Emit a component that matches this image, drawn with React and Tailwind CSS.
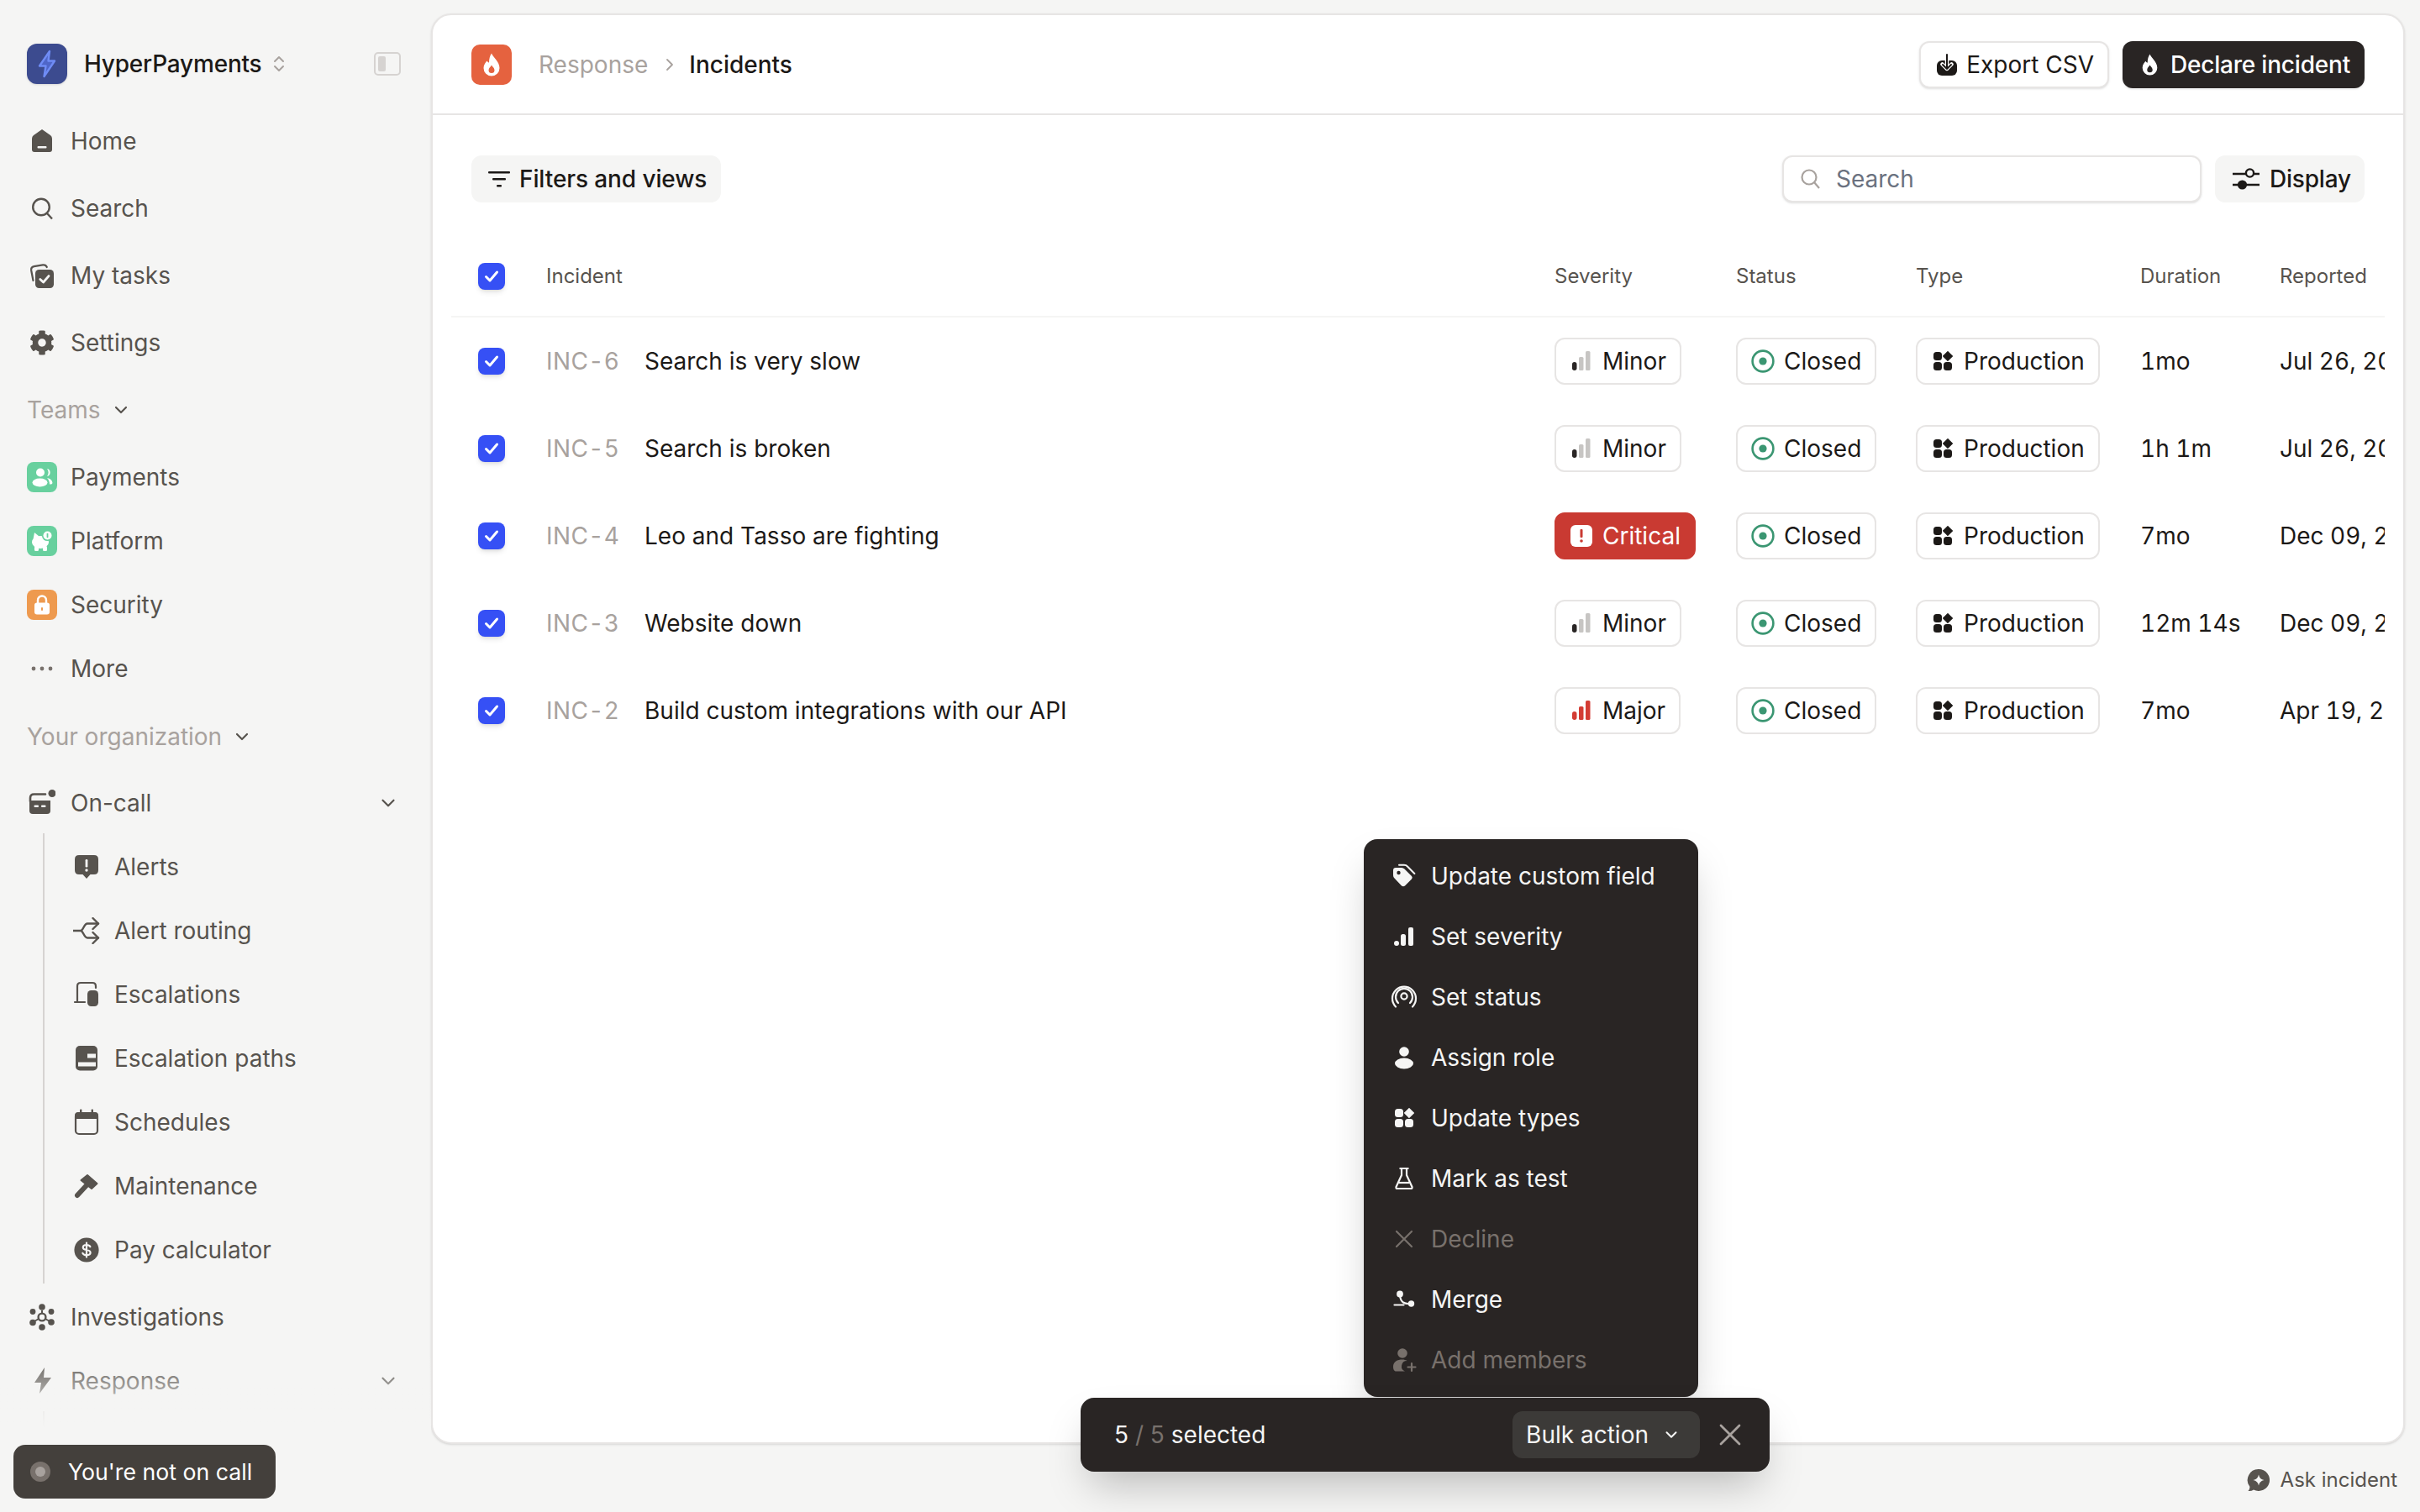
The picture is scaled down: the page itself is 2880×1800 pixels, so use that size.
import {
  ChevronDown,
  ChevronRight,
  ChevronsUpDown,
  X,
} from "lucide-react";
import { FaCog } from "react-icons/fa";

const STONE = "#57534e";

// Generic 32px icon box, coordinates are real pixels
function Ico({ children, size = 32, className = "" }) {
  return (
    <svg
      width={size}
      height={size}
      viewBox={`0 0 ${size} ${size}`}
      fill="none"
      className={`shrink-0 ${className}`}
    >
      {children}
    </svg>
  );
}

// Sidebar icons
const HomeIcon = () => (
  <Ico>
    <path d="M16 2 L26 9 Q28 10.5 28 13 V26 Q28 29 25 29 H7 Q4 29 4 26 V13 Q4 10.5 6 9 Z" fill={STONE} />
    <rect x="10.5" y="22" width="11" height="2.6" rx="1" fill="#f5f5f4" />
  </Ico>
);
const SearchIcon = ({ color = STONE, sw = 2.4 }) => (
  <Ico>
    <circle cx="15" cy="14.5" r="9.8" stroke={color} strokeWidth={sw} />
    <path d="M22 22 L28 28.5" stroke={color} strokeWidth={sw} />
  </Ico>
);
const TasksIcon = () => (
  <Ico>
    <path d="M5.5 22 L3.2 10 Q2.6 6 6.5 5.2 L17 3.4 Q20.6 3 21.8 6" stroke={STONE} strokeWidth="2.2" strokeLinecap="round" />
    <rect x="8" y="9" width="22" height="22" rx="4.5" fill={STONE} />
    <path d="M13.8 20.4 L17.6 24 L24 16.6" stroke="#f5f5f4" strokeWidth="2.8" strokeLinecap="round" strokeLinejoin="round" />
  </Ico>
);
const OnCallIcon = () => (
  <Ico>
    <path d="M2 14 V10 Q2 5.5 6.5 5.5 H20" stroke={STONE} strokeWidth="2.6" strokeLinecap="round" />
    <circle cx="28" cy="4.5" r="4.5" fill={STONE} />
    <path d="M2 13 H26 V25 Q26 29 22 29 H5 Q1 29 1 25 V13 Z" fill={STONE} />
    <rect x="6.5" y="18.5" width="5.5" height="2.6" rx="1" fill="#f5f5f4" />
    <rect x="15" y="18.5" width="5.5" height="2.6" rx="1" fill="#f5f5f4" />
  </Ico>
);
const AlertIcon = () => (
  <Ico>
    <path d="M7 2 H25 Q30 2 30 7 V20 Q30 25 25 25 H20.5 L16 30 L11.5 25 H7 Q2 25 2 20 V7 Q2 2 7 2 Z" fill={STONE} />
    <rect x="14.6" y="7" width="2.8" height="9.5" rx="1.2" fill="#f5f5f4" />
    <circle cx="16" cy="20" r="1.7" fill="#f5f5f4" />
  </Ico>
);
const RoutingIcon = () => (
  <Ico>
    <path d="M0 16 H9 C12 16 13 7.5 17 7.5 H30 M9 16 C12 16 13 24.5 17 24.5 H30" stroke={STONE} strokeWidth="2.4" strokeLinecap="round" />
    <path d="M23.5 1 L30 7.5 L23.5 14 M23.5 18 L30 24.5 L23.5 31" stroke={STONE} strokeWidth="2.4" strokeLinecap="round" strokeLinejoin="round" />
  </Ico>
);
const EscalationIcon = () => (
  <Ico>
    <path d="M5 25 V6 Q5 2 9 2 H23 Q27 2 27 6 V8 M2 25 H14" stroke={STONE} strokeWidth="2.2" strokeLinecap="round" />
    <rect x="17" y="11" width="13" height="19" rx="4.5" fill={STONE} />
  </Ico>
);
const PathsIcon = () => (
  <Ico>
    <rect x="3" y="1" width="26" height="29.5" rx="5" fill={STONE} />
    <rect x="17" y="10.5" width="10" height="5" fill="#f5f5f4" />
    <rect x="6" y="20.5" width="21" height="5" fill="#f5f5f4" />
  </Ico>
);
const CalendarIcon = () => (
  <Ico>
    <path d="M2 12 V8 Q2 4 6 4 H26 Q30 4 30 8 V12 Z" fill={STONE} />
    <rect x="3" y="5" width="26" height="25" rx="4" stroke={STONE} strokeWidth="2.2" />
    <rect x="8" y="0.5" width="2.4" height="5" rx="1" fill={STONE} />
    <rect x="21.6" y="0.5" width="2.4" height="5" rx="1" fill={STONE} />
  </Ico>
);
const HammerIcon = () => (
  <Ico>
    <path d="M5 27 L17 14" stroke={STONE} strokeWidth="6" strokeLinecap="round" />
    <path d="M9.5 9 L17 3 L28.5 13 L22 19 Z" fill={STONE} stroke={STONE} strokeWidth="2" strokeLinejoin="round" />
  </Ico>
);
const PayIcon = () => (
  <Ico>
    <circle cx="16" cy="16" r="14.6" fill={STONE} />
    <path d="M20.4 12.2 Q19.4 10 16 10 Q11.8 10 11.8 13 Q11.8 15.4 16 16 Q20.6 16.8 20.6 19.2 Q20.6 22.2 16 22.2 Q12.4 22.2 11.4 19.8 M16 7.6 V24.6" stroke="#f5f5f4" strokeWidth="2.2" strokeLinecap="round" />
  </Ico>
);
const InvestigationsIcon = () => (
  <Ico>
    <circle cx="16" cy="4" r="3.8" fill={STONE} />
    <circle cx="16" cy="28" r="3.8" fill={STONE} />
    <circle cx="5" cy="9.5" r="3.4" fill={STONE} />
    <circle cx="27" cy="9.5" r="3.4" fill={STONE} />
    <circle cx="5" cy="22.5" r="3.8" fill={STONE} />
    <circle cx="27" cy="22" r="3.8" fill={STONE} />
    <circle cx="16" cy="16" r="4.4" stroke={STONE} strokeWidth="2.4" />
    <path d="M20 18 L25 21 M12 18 L7 21 M16 8 V11.5" stroke={STONE} strokeWidth="2" />
  </Ico>
);
const BoltIcon = () => (
  <Ico>
    <path d="M19 0 L7 18 H15 L13 31 L27 12 H18 Z" fill={STONE} />
  </Ico>
);
const DotsIcon = () => (
  <Ico>
    <circle cx="6" cy="16" r="2.4" fill="#78716c" />
    <circle cx="16" cy="16" r="2.4" fill="#78716c" />
    <circle cx="26" cy="16" r="2.4" fill="#78716c" />
  </Ico>
);

// Team badges
const PeopleBadge = () => (
  <div className="w-9 h-9 rounded-[8px] bg-[#68d09e] flex items-center justify-center shrink-0">
    <svg width="26" height="24" viewBox="0 0 26 24" fill="none">
      <circle cx="11" cy="6.5" r="5" fill="#fff" />
      <path d="M19 2 a4.6 4.6 0 0 1 0 9 a7 7 0 0 0 0 -9 Z" fill="#fff" />
      <ellipse cx="10.5" cy="18.5" rx="9" ry="5" fill="#fff" />
      <path d="M19 13 Q25 14 25.5 19 Q25 21 22 20.5 Q22 16 19 13 Z" fill="#fff" />
    </svg>
  </div>
);
const PiggyBadge = () => (
  <div className="w-9 h-9 rounded-[8px] bg-[#68d09e] flex items-center justify-center shrink-0">
    <svg width="28" height="28" viewBox="0 0 28 28" fill="none">
      <ellipse cx="12" cy="15.5" rx="10" ry="7.5" fill="#fff" />
      <path d="M5 4 L10.5 8.5 L3.5 12 Z" fill="#fff" />
      <rect x="5" y="20" width="5" height="6" rx="1.5" fill="#fff" />
      <rect x="15" y="20" width="5" height="6" rx="1.5" fill="#fff" />
      <circle cx="20.5" cy="7.5" r="6.6" fill="#68d09e" />
      <circle cx="20.5" cy="7.5" r="5" fill="#fff" />
      <rect x="19.6" y="4.8" width="1.8" height="5.4" rx="0.8" fill="#68d09e" />
    </svg>
  </div>
);
const LockBadge = () => (
  <div className="w-9 h-9 rounded-[8px] bg-[#ee9a4f] flex items-center justify-center shrink-0">
    <svg width="20" height="24" viewBox="0 0 20 24" fill="none">
      <path d="M5 11 V6.5 a5 5 0 0 1 10 0 V11" stroke="#fff" strokeWidth="2.4" />
      <rect x="1" y="9.5" width="18" height="14" rx="3" fill="#fff" />
      <rect x="9" y="15" width="2" height="4" rx="1" fill="#ee9a4f" />
    </svg>
  </div>
);

const NavRow = ({ icon, label, h = "h-[76px]", right }) => (
  <div className={`flex items-center ${h} pl-[34px] pr-[38px] text-[28px] text-[#57534e]`}>
    {icon}
    <span className="ml-[18px]">{label}</span>
    {right && <span className="ml-auto">{right}</span>}
  </div>
);

const SubRow = ({ icon, label }) => (
  <div className="flex items-center h-[76px] pl-[34px] text-[28px] text-[#57534e]">
    {icon}
    <span className="ml-[17px]">{label}</span>
  </div>
);

const SectionLabel = ({ label, h }) => (
  <div className={`flex items-center gap-[12px] ${h} pl-[32px] text-[28px] text-[#a8a29e]`}>
    <span>{label}</span>
    <ChevronDown size={24} color={STONE} strokeWidth={2.2} />
  </div>
);

const subNav = [
  [<AlertIcon />, "Alerts"],
  [<RoutingIcon />, "Alert routing"],
  [<EscalationIcon />, "Escalations"],
  [<PathsIcon />, "Escalation paths"],
  [<CalendarIcon />, "Schedules"],
  [<HammerIcon />, "Maintenance"],
  [<PayIcon />, "Pay calculator"],
];

function Sidebar() {
  return (
    <aside className="relative w-[513px] h-[1800px] shrink-0 overflow-hidden">
      <div className="flex items-center h-[48px] mt-[52px] pl-[32px] pr-[36px]">
        <div className="w-12 h-12 rounded-[12px] bg-[#3c4b8f] shadow-sm flex items-center justify-center">
          <svg width="28" height="34" viewBox="0 0 28 34" fill="none">
            <path d="M17 2 L5 19.5 H12.5 L10.5 32 L23 13.5 H15.5 Z" fill="#4f66c8" stroke="#6f8cf5" strokeWidth="2.4" strokeLinejoin="round" />
          </svg>
        </div>
        <span className="ml-[20px] text-[28px] font-medium tracking-[-0.2px] text-[#1c1917]">HyperPayments</span>
        <ChevronsUpDown size={24} color="#a8a29e" strokeWidth={2} className="ml-[8px]" />
        <div className="ml-auto w-8 h-[28px] rounded-[5px] border-[2px] border-[#d6d3d1] p-[3px]">
          <div className="w-[9px] h-full rounded-[2px] bg-[#d6d3d1]" />
        </div>
      </div>

      <div className="mt-[28px]">
        <NavRow h="h-[80px]" icon={<HomeIcon />} label="Home" />
        <NavRow h="h-[80px]" icon={<SearchIcon />} label="Search" />
        <NavRow h="h-[80px]" icon={<TasksIcon />} label="My tasks" />
        <NavRow h="h-[80px]" icon={<Ico><FaCog size={30} color={STONE} x="1" y="1" /></Ico>} label="Settings" />
      </div>

      <SectionLabel label="Teams" h="h-[80px]" />
      <div className="mt-[2px]">
        {[
          [<PeopleBadge />, "Payments"],
          [<PiggyBadge />, "Platform"],
          [<LockBadge />, "Security"],
        ].map(([icon, label]) => (
          <div key={label} className="flex items-center h-[76px] pl-[32px] text-[28px] text-[#57534e]">
            {icon}
            <span className="ml-[16px]">{label}</span>
          </div>
        ))}
        <NavRow icon={<DotsIcon />} label="More" />
      </div>

      <SectionLabel label="Your organization" h="h-[86px]" />
      <NavRow
        h="h-[72px]"
        icon={<OnCallIcon />}
        label="On-call"
        right={<ChevronDown size={26} color={STONE} strokeWidth={2} />}
      />
      <div className="ml-[51px] border-l-[2px] border-[#d6d3d1] pt-[2px] pb-[2px]">
        {subNav.map(([icon, label]) => (
          <SubRow key={label} icon={icon} label={label} />
        ))}
      </div>
      <NavRow h="h-[80px]" icon={<InvestigationsIcon />} label="Investigations" />
      <NavRow
        h="h-[72px]"
        icon={<BoltIcon />}
        label="Response"
        right={<ChevronDown size={26} color={STONE} strokeWidth={2} />}
      />
      <div className="ml-[51px] h-[30px] border-l-[2px] border-[#d6d3d1]" />

      {/* fade above the on-call pill */}
      <div className="absolute left-0 right-0 top-[1610px] h-[90px] bg-gradient-to-b from-[#f5f5f400] to-[#f5f5f4]" />
      <div className="absolute left-0 right-0 top-[1700px] bottom-0 bg-[#f5f5f4]" />

      <div className="absolute left-[16px] top-[1720px] w-[312px] h-[64px] rounded-[14px] bg-[#44403c] flex items-center pl-[20px] text-[26.7px] text-white">
        <div className="w-6 h-6 rounded-full bg-[#78716c] flex items-center justify-center">
          <div className="w-3 h-3 rounded-full bg-[#a8a29e]" />
        </div>
        <span className="ml-[21px]">You're not on call</span>
      </div>
    </aside>
  );
}

// Table bits
const Check = () => (
  <div className="w-8 h-8 rounded-[8px] bg-[#3650f5] shadow-md flex items-center justify-center">
    <svg width="20" height="20" viewBox="0 0 20 20" fill="none">
      <path d="M3.5 10.5 L8 15 L16.5 5" stroke="#fff" strokeWidth="3" strokeLinecap="round" strokeLinejoin="round" />
    </svg>
  </div>
);

const Bars = ({ major }) => {
  const first = major ? "#d33c34" : "#292524";
  const rest = major ? "#d33c34" : "#c7c5c3";
  return (
    <svg width="28" height="28" viewBox="0 0 28 28" className="shrink-0">
      <rect x="3" y="15" width="5.5" height="10" rx="2.7" fill={first} />
      <rect x="11" y="9" width="5.5" height="16" rx="1.5" fill={rest} />
      <rect x="19" y="2" width="5.5" height="23" rx="1.5" fill={rest} />
    </svg>
  );
};

const ClosedIcon = () => (
  <svg width="28" height="28" viewBox="0 0 28 28" className="shrink-0">
    <circle cx="14" cy="14" r="12.4" fill="none" stroke="#3b9672" strokeWidth="2.6" />
    <circle cx="14" cy="14" r="4.6" fill="#3b9672" />
  </svg>
);

const TypesIcon = ({ color = "#1c1917", size = 28 }) => (
  <svg width={size} height={size} viewBox="0 0 28 28" className="shrink-0">
    <rect x="3" y="3" width="10" height="10" rx="3.5" fill={color} />
    <path d="M20 2.2 L25.8 8 L20 13.8 L14.2 8 Z" fill={color} strokeLinejoin="round" stroke={color} strokeWidth="0.8" />
    <rect x="3" y="15" width="10" height="10" rx="3.5" fill={color} />
    <rect x="15" y="15" width="10" height="10" rx="3.5" fill={color} />
  </svg>
);

const Chip = ({ icon, children, danger }) => (
  <div
    className={`inline-flex items-center gap-[11px] h-[56px] px-4 rounded-[12px] border-[2px] text-[28px] whitespace-nowrap ${
      danger ? "bg-[#c93a32] border-[#c93a32] text-white" : "bg-white border-[#e7e5e4] text-[#1c1917]"
    }`}
  >
    {icon}
    {children}
  </div>
);

const Severity = ({ level }) => {
  if (level === "Critical") {
    return (
      <Chip
        danger
        icon={
          <div className="w-[26px] h-[26px] mx-[1px] rounded-[6px] bg-white flex items-center justify-center shrink-0">
            <svg width="6" height="18" viewBox="0 0 6 18">
              <rect x="1.5" y="1" width="3" height="10" rx="1" fill="#c93a32" />
              <circle cx="3" cy="15" r="1.8" fill="#c93a32" />
            </svg>
          </div>
        }
      >
        Critical
      </Chip>
    );
  }
  return <Chip icon={<Bars major={level === "Major"} />}>{level}</Chip>;
};

const incidents = [
  { ref: "INC-6", name: "Search is very slow", severity: "Minor", duration: "1mo", reported: "Jul 26, 2024" },
  { ref: "INC-5", name: "Search is broken", severity: "Minor", duration: "1h 1m", reported: "Jul 26, 2024" },
  { ref: "INC-4", name: "Leo and Tasso are fighting", severity: "Critical", duration: "7mo", reported: "Dec 09, 2023" },
  { ref: "INC-3", name: "Website down", severity: "Minor", duration: "12m 14s", reported: "Dec 09, 2023" },
  { ref: "INC-2", name: "Build custom integrations with our API", severity: "Major", duration: "7mo", reported: "Apr 19, 2024" },
];

const GRID = "grid grid-cols-[113px_1200px_216px_214px_267px_166px_125px] items-center";

function IncidentTable() {
  return (
    <div className="mx-[22px] mt-[40px] overflow-hidden">
      <div className={`${GRID} h-[97px] border-b-[2px] border-[#f5f5f4] text-[24px] text-[#57534e]`}>
        <div className="pl-[32px]">
          <Check />
        </div>
        <div>Incident</div>
        <div>Severity</div>
        <div>Status</div>
        <div>Type</div>
        <div>Duration</div>
        <div className="whitespace-nowrap">Reported</div>
      </div>
      {incidents.map((row) => (
        <div key={row.ref} className={`${GRID} h-[104px] text-[28px] text-[#1c1917]`}>
          <div className="pl-[32px]">
            <Check />
          </div>
          <div className="flex items-center">
            <span className="w-[117px] text-[#a8a29e] tracking-[0.4px] tabular-nums">{row.ref}</span>
            <span>{row.name}</span>
          </div>
          <div>
            <Severity level={row.severity} />
          </div>
          <div>
            <Chip icon={<ClosedIcon />}>Closed</Chip>
          </div>
          <div>
            <Chip icon={<TypesIcon />}>Production</Chip>
          </div>
          <div className="whitespace-nowrap tabular-nums">{row.duration}</div>
          <div className="whitespace-nowrap overflow-hidden tabular-nums">{row.reported}</div>
        </div>
      ))}
    </div>
  );
}

const FlameIcon = ({ color = "#fff", inner = "#e5623f", w = 22, h = 28 }) => (
  <svg width={w} height={h} viewBox="0 0 22 28" className="shrink-0">
    <path d="M11 0.5 C12.5 5 20.5 10 20.5 18 A9.5 9.5 0 0 1 1.5 18 C1.5 14 4 11.5 5.5 9.5 C6.5 11 7.5 11.5 8 11.5 C8 7 9 3.5 11 0.5 Z" fill={color} />
    <path d="M11 14.5 C12 16.5 14.5 18 14.5 20.5 A3.5 3.5 0 0 1 7.5 20.5 C7.5 18 10 16.5 11 14.5 Z" fill={inner} />
  </svg>
);

function Header() {
  return (
    <div className="flex items-center h-[119px] border-b-[2px] border-[#e7e5e4] px-[46px]">
      <div className="w-12 h-12 rounded-[10px] bg-[#e5623f] flex items-center justify-center">
        <FlameIcon />
      </div>
      <span className="ml-[32px] text-[28px] text-[#a8a29e]">Response</span>
      <ChevronRight size={24} color="#a8a29e" strokeWidth={1.8} className="ml-[14px]" />
      <span className="ml-[11px] text-[28px] font-medium text-[#1c1917]">Incidents</span>
      <div className="ml-auto flex items-center gap-[16px]">
        <button className="flex items-center gap-[10px] h-[56px] pl-[18px] pr-[16px] rounded-[12px] border-[2px] border-[#e7e5e4] bg-white shadow-sm text-[28px] text-[#1c1917]">
          <svg width="26" height="26" viewBox="0 0 26 26" className="shrink-0">
            <rect x="1" y="8" width="24" height="18" rx="6" fill="#1c1917" />
            <path d="M13 0 V18 M7.5 12.5 L13 18 L18.5 12.5" fill="none" stroke="#fff" strokeWidth="4.5" strokeLinecap="round" strokeLinejoin="round" />
            <path d="M13 1 V18 M8 13 L13 18 L18 13" fill="none" stroke="#1c1917" strokeWidth="2" strokeLinecap="round" strokeLinejoin="round" />
          </svg>
          Export CSV
        </button>
        <button className="flex items-center gap-[14px] h-[56px] pl-[22px] pr-[17px] rounded-[12px] bg-[#292524] shadow-sm text-[28px] font-medium tracking-[-0.2px] text-white">
          <FlameIcon inner="#292524" w={21} h={26} />
          Declare incident
        </button>
      </div>
    </div>
  );
}

function Toolbar() {
  return (
    <div className="flex items-center px-[46px] mt-[48px]">
      <button className="flex items-center gap-[11px] h-[56px] pl-[20px] pr-[17px] rounded-[12px] bg-[#f5f5f4] text-[28px] font-medium tracking-[-0.1px] text-[#1c1917]">
        <svg width="26" height="24" viewBox="0 0 26 24" className="shrink-0">
          <rect x="0" y="3" width="26" height="2.4" rx="1" fill="#1c1917" />
          <rect x="5" y="11" width="16" height="2.4" rx="1" fill="#1c1917" />
          <rect x="10" y="19" width="6" height="2.4" rx="1" fill="#1c1917" />
        </svg>
        Filters and views
      </button>
      <div className="ml-auto flex items-center gap-[16px]">
        <div className="flex items-center w-[499px] h-[56px] pl-[19px] rounded-[12px] border-[2px] border-[#e7e5e4] bg-white shadow-sm text-[28px] text-[#6b7280]">
          <Ico size={26}>
            <circle cx="11" cy="11" r="8.5" stroke="#a8a29e" strokeWidth="2.2" />
            <path d="M17 17 L23 24" stroke="#a8a29e" strokeWidth="2.2" />
          </Ico>
          <span className="ml-[17px]">Search</span>
        </div>
        <button className="flex items-center gap-[12px] w-[178px] h-[56px] pl-[21px] rounded-[12px] bg-[#f5f5f4] text-[28px] font-medium tracking-[-0.2px] text-[#1c1917]">
          <svg width="32" height="28" viewBox="0 0 32 28" className="shrink-0">
            <path d="M0 8 H16 M25 8 H32" stroke="#1c1917" strokeWidth="2.4" />
            <circle cx="20.5" cy="7" r="4.6" fill="none" stroke="#1c1917" strokeWidth="2.4" />
            <path d="M0 21 H7 M16 21 H32" stroke="#1c1917" strokeWidth="2.4" />
            <circle cx="11.5" cy="21" r="5.6" fill="#1c1917" />
          </svg>
          Display
        </button>
      </div>
    </div>
  );
}

// Bulk action menu icons
const menuItems = [
  {
    label: "Update custom field",
    icon: (
      <Ico>
        <path d="M3 9 V15 Q3 17 4.5 18.5 L13 27.5 Q15 29 17 27.5 L25 19.5 Q26.5 17.5 25 16 L16.5 7.5 Q15 6 13 6 H6 Q3 6 3 9 Z" fill="#f5f5f4" />
        <circle cx="9.5" cy="12" r="2.2" fill="#292524" />
        <path d="M10 2.8 H16 Q18.5 2.8 20 4.5 L28.4 13" stroke="#f5f5f4" strokeWidth="2" strokeLinecap="round" fill="none" />
      </Ico>
    ),
  },
  {
    label: "Set severity",
    icon: (
      <Ico>
        <circle cx="7" cy="24" r="3" fill="#f5f5f4" />
        <rect x="12" y="13" width="6" height="14" rx="2.5" fill="#f5f5f4" />
        <rect x="21" y="5" width="6" height="22" rx="2" fill="#f5f5f4" />
      </Ico>
    ),
  },
  {
    label: "Set status",
    icon: (
      <Ico>
        <circle cx="16" cy="15" r="3.6" stroke="#f5f5f4" strokeWidth="2.2" />
        <path d="M9 23 A10 10 0 1 1 23 23" stroke="#f5f5f4" strokeWidth="2.2" strokeLinecap="round" />
        <path d="M6 27.5 A14 14 0 1 1 26 27.5" stroke="#f5f5f4" strokeWidth="2.2" strokeLinecap="round" />
      </Ico>
    ),
  },
  {
    label: "Assign role",
    icon: (
      <Ico>
        <circle cx="16" cy="9" r="5.8" fill="#f5f5f4" />
        <ellipse cx="16" cy="23" rx="11" ry="6.5" fill="#f5f5f4" />
      </Ico>
    ),
  },
  { label: "Update types", icon: <Ico><g transform="translate(2,2)"><TypesIcon color="#f5f5f4" /></g></Ico> },
  {
    label: "Mark as test",
    icon: (
      <Ico>
        <path d="M10.5 4 H21.5 M13 4 V12 L6.5 26 Q6 28 8 28 H24 Q26 28 25.5 26 L19 12 V4" stroke="#f5f5f4" strokeWidth="2.2" strokeLinejoin="round" />
        <path d="M9.5 21 H22.5" stroke="#f5f5f4" strokeWidth="2.2" />
      </Ico>
    ),
  },
  {
    label: "Decline",
    disabled: true,
    icon: (
      <Ico>
        <path d="M7 7 L25 25 M25 7 L7 25" stroke="#78716c" strokeWidth="2.2" strokeLinecap="round" />
      </Ico>
    ),
  },
  {
    label: "Merge",
    icon: (
      <Ico>
        <circle cx="11" cy="9.5" r="3.9" fill="#f5f5f4" />
        <circle cx="24.5" cy="21" r="3.7" fill="#f5f5f4" />
        <path d="M11 11 Q11.5 17 15 19.5 Q18 21.5 23 21" stroke="#f5f5f4" strokeWidth="2.2" fill="none" />
        <path d="M4.5 22.5 H15.5" stroke="#f5f5f4" strokeWidth="2.2" strokeLinecap="round" />
      </Ico>
    ),
  },
  {
    label: "Add members",
    disabled: true,
    icon: (
      <Ico>
        <circle cx="14" cy="8" r="5.8" fill="#78716c" />
        <path d="M3 24 C3 18 8 15.5 14 15.5 C16 15.5 18 16 19.5 17 A6.5 6.5 0 0 0 17 29.5 H6.5 C4 29.5 3 27 3 24 Z" fill="#78716c" />
        <path d="M25 20 V29 M20.5 24.5 H29.5" stroke="#78716c" strokeWidth="2.2" strokeLinecap="round" />
      </Ico>
    ),
  },
];

function BulkMenu() {
  return (
    <div className="absolute left-[1623px] top-[999px] w-[398px] py-2 rounded-[16px] bg-[#292524] shadow-2xl">
      {menuItems.map((item) => (
        <div
          key={item.label}
          className={`flex items-center gap-4 h-[72px] pl-8 text-[28px] ${item.disabled ? "text-[#78716c]" : "text-[#f5f5f4]"}`}
        >
          {item.icon}
          {item.label}
        </div>
      ))}
    </div>
  );
}

function BulkBar() {
  return (
    <div className="absolute left-[1286px] top-[1664px] w-[820px] h-[88px] rounded-[16px] bg-[#292524] shadow-2xl flex items-center pl-[40px] pr-[25px] text-[28px] text-[#f5f5f4]">
      <span>
        5 <span className="text-[#78716c]">/ 5</span> selected
      </span>
      <button className="ml-auto flex items-center gap-[16px] h-[56px] pl-[16px] pr-[23px] rounded-[12px] bg-[#3c3a38] text-[28px] text-[#f5f5f4]">
        Bulk action
        <ChevronDown size={22} color="#f5f5f4" strokeWidth={2.2} />
      </button>
      <X size={44} color="#a8a29e" strokeWidth={1.5} className="ml-[14px]" />
    </div>
  );
}

export default function App() {
  return (
    <div className="relative flex w-[2880px] h-[1800px] overflow-hidden bg-[#f5f5f4] font-['Inter',sans-serif]">
      <Sidebar />
      <div className="flex flex-col flex-1 pr-[18px]">
        <main className="mt-[16px] h-[1703px] rounded-[24px] border-[2px] border-[#e7e5e4] bg-white shadow-sm overflow-hidden">
          <Header />
          <Toolbar />
          <IncidentTable />
        </main>
        <div className="flex items-center justify-end gap-[12px] mt-[25px] pr-[9px] text-[24px] text-[#57534e]">
          <svg width="28" height="28" viewBox="0 0 28 28" className="shrink-0">
            <path d="M14 1 A13 13 0 1 1 8 25.5 Q5 27.5 1.5 27 Q3.5 24.5 3.5 22 A13 13 0 0 1 14 1 Z" fill={STONE} />
            <path d="M14 7.5 Q15 13 20.5 14 Q15 15 14 20.5 Q13 15 7.5 14 Q13 13 14 7.5 Z" fill="#f5f5f4" />
          </svg>
          Ask incident
        </div>
      </div>
      <BulkMenu />
      <BulkBar />
    </div>
  );
}
